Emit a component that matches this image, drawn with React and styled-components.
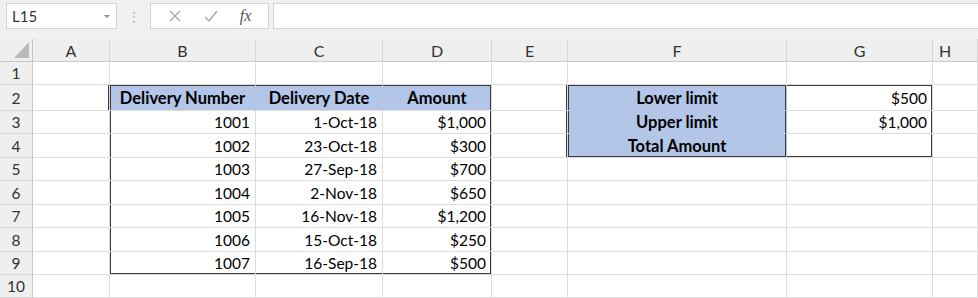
import styled, { createGlobalStyle } from "styled-components";

const GlobalStyle = createGlobalStyle`
  * { box-sizing: border-box; }
  body {
    margin: 0;
    background: #ffffff;
    font-family: Lato, "Open Sans", sans-serif;
    overflow: hidden;
  }
`;

const Page = styled.div`
  width: 978px;
  height: 298px;
  overflow: hidden;
  background: #ffffff;
`;

const FormulaBar = styled.div`
  height: 39px;
  background: #f1f1f1;
  display: flex;
  align-items: flex-start;
  padding: 3px 0 0 6px;
`;

const NameBox = styled.div`
  width: 111px;
  height: 26px;
  background: #ffffff;
  border: 1px solid #d4d4d4;
  display: flex;
  align-items: center;
  justify-content: space-between;
  padding: 0 6px 0 5px;
  font-size: 15px;
  color: #333;
`;

const DropArrow = styled.span`
  width: 0;
  height: 0;
  border-left: 3px solid transparent;
  border-right: 3px solid transparent;
  border-top: 3px solid #8a8a8a;
`;

const Dots = styled.div`
  width: 33px;
  height: 26px;
  display: flex;
  align-items: center;
  justify-content: center;
  color: #b8b8b8;
  font-size: 14px;
`;

const ActionBox = styled.div`
  width: 119px;
  height: 26px;
  background: #ffffff;
  border: 1px solid #d4d4d4;
  display: flex;
  align-items: center;
  justify-content: space-around;
  padding: 0 6px;
`;

const Fx = styled.span`
  font-family: "Liberation Serif", serif;
  font-style: italic;
  font-size: 16px;
  color: #555;
`;

const Formula = styled.div`
  flex: 1;
  height: 26px;
  margin-left: 4px;
  background: #ffffff;
  border: 1px solid #d4d4d4;
  border-right: none;
`;

const Sheet = styled.div`
  display: grid;
  grid-template-columns: 33px 77px 146px 127px 109px 76px 219px 146px 45px;
  grid-template-rows: 23px 23px 26px 23px 24px 23px 24px 23px 24px 23px 23px;
`;

const ColHead = styled.div`
  background: #efefef;
  border-right: 1px solid #d6d6d6;
  border-bottom: 1px solid #c8c8c8;
  display: flex;
  align-items: center;
  justify-content: ${(p) => (p.$left ? "flex-start" : "center")};
  padding-left: ${(p) => (p.$left ? "6px" : "0")};
  font-size: 16px;
  color: #333;
`;

const Corner = styled.div`
  background: #efefef;
  border-right: 1px solid #c8c8c8;
  border-bottom: 1px solid #c8c8c8;
  position: relative;
  &::after {
    content: "";
    position: absolute;
    right: 3px;
    bottom: 3px;
    border-left: 15px solid transparent;
    border-bottom: 16px solid #b9b9b9;
  }
`;

const RowHead = styled.div`
  background: #efefef;
  border-right: 1px solid #c8c8c8;
  border-bottom: 1px solid #d6d6d6;
  display: flex;
  align-items: center;
  justify-content: center;
  font-size: 15.5px;
  color: #333;
`;

const Cell = styled.div`
  background: ${(p) => (p.$fill ? "#b4c6e7" : "#ffffff")};
  border-right: 1px solid ${(p) => (p.$noRight ? (p.$fill ? "#b4c6e7" : "#ffffff") : "#dcdcdc")};
  border-bottom: 1px solid ${(p) => (p.$noBottom ? (p.$fill ? "#b4c6e7" : "#ffffff") : "#dcdcdc")};
  box-shadow: ${(p) =>
    [
      p.$t && "inset 0 1px 0 #3a3a3a",
      p.$l && "inset 1px 0 0 #3a3a3a",
      p.$r && "inset -1px 0 0 #3a3a3a",
      p.$b && "inset 0 -1px 0 #3a3a3a",
    ]
      .filter(Boolean)
      .join(", ") || "none"};
  display: flex;
  align-items: center;
  justify-content: ${(p) =>
    p.$align === "center" ? "center" : p.$align === "left" ? "flex-start" : "flex-end"};
  padding: 0 5px 0 5px;
  font-size: ${(p) => (p.$bold ? "16.5px" : "15.5px")};
  font-weight: ${(p) => (p.$bold ? 700 : 400)};
  color: #000;
  white-space: nowrap;
`;

const columns = ["A", "B", "C", "D", "E", "F", "G", "H"];

const deliveries = [
  ["1001", "1-Oct-18", "$1,000"],
  ["1002", "23-Oct-18", "$300"],
  ["1003", "27-Sep-18", "$700"],
  ["1004", "2-Nov-18", "$650"],
  ["1005", "16-Nov-18", "$1,200"],
  ["1006", "15-Oct-18", "$250"],
  ["1007", "16-Sep-18", "$500"],
];

const limits = [
  ["Lower limit", "$500"],
  ["Upper limit", "$1,000"],
  ["Total Amount", ""],
];

function rightSide(rowIndex) {
  // rowIndex: 1..10 -> E, F, G, H cells
  const li = rowIndex - 2;
  if (li >= 0 && li < limits.length) {
    const [label, value] = limits[li];
    const last = li === limits.length - 1;
    return [
      <Cell key="E" $r />,
      <Cell key="F" $fill $bold $align="center" $noBottom={!last} $noRight $t={li === 0} $l $b={last} $r>
        {label}
      </Cell>,
      <Cell key="G" $t={li === 0} $r $b={last}>
        {value}
      </Cell>,
      <Cell key="H" />,
    ];
  }
  return [<Cell key="E" />, <Cell key="F" />, <Cell key="G" />, <Cell key="H" />];
}

export default function App() {
  return (
    <Page>
      <GlobalStyle />
      <FormulaBar>
        <NameBox>
          L15
          <DropArrow />
        </NameBox>
        <Dots>⋮</Dots>
        <ActionBox>
          <svg width="14" height="14" viewBox="0 0 14 14">
            <path d="M2 2 L12 12 M12 2 L2 12" stroke="#a6a6a6" strokeWidth="1.3" fill="none" />
          </svg>
          <svg width="16" height="14" viewBox="0 0 16 14">
            <path d="M2 8 L6 12 L14 2" stroke="#a6a6a6" strokeWidth="1.4" fill="none" />
          </svg>
          <Fx>fx</Fx>
        </ActionBox>
        <Formula />
      </FormulaBar>
      <Sheet>
        <Corner />
        {columns.map((c, i) => (
          <ColHead key={c} $left={i === columns.length - 1}>
            {c}
          </ColHead>
        ))}

        <RowHead>1</RowHead>
        {columns.map((c) => (
          <Cell key={c} />
        ))}

        <RowHead>2</RowHead>
        <Cell $r />
        <Cell $fill $bold $align="center" $t $l $noRight>Delivery Number</Cell>
        <Cell $fill $bold $align="center" $t $noRight>Delivery Date</Cell>
        <Cell $fill $bold $align="center" $t $r>Amount</Cell>
        {rightSide(2)}

        {deliveries.map((d, i) => {
          const last = i === deliveries.length - 1;
          return [
            <RowHead key={"h" + i}>{i + 3}</RowHead>,
            <Cell key={"a" + i} />,
            <Cell key={"b" + i} $l $b={last}>{d[0]}</Cell>,
            <Cell key={"c" + i} $b={last}>{d[1]}</Cell>,
            <Cell key={"d" + i} $r $b={last}>{d[2]}</Cell>,
            ...rightSide(i + 3),
          ];
        })}

        <RowHead>10</RowHead>
        {columns.map((c) => (
          <Cell key={c} />
        ))}
      </Sheet>
    </Page>
  );
}
